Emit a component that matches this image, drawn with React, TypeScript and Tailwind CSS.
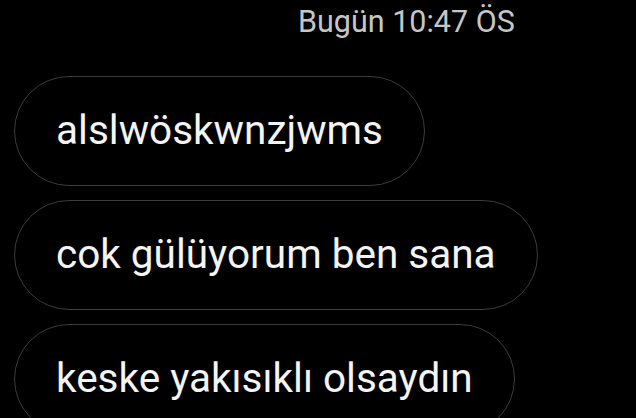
const messages = [
  "alslwöskwnzjwms",
  "cok gülüyorum ben sana",
  "keske yakısıklı olsaydın",
];

export default function App() {
  return (
    <div
      className="w-[636px] h-[418px] overflow-hidden bg-black"
      style={{ fontFamily: "Roboto, 'Noto Sans', sans-serif" }}
    >
      {/* date stamp */}
      <div className="pt-[7px] pl-[298px] text-[30.5px] leading-[30px] text-[#c6c6c6] whitespace-nowrap">
        Bugün 10:47 ÖS
      </div>

      {/* received bubbles */}
      <div className="mt-[39px] pl-[14px] flex flex-col items-start gap-[14px]">
        {messages.map((m) => (
          <div
            key={m}
            className="h-[110px] shrink-0 rounded-full border-[1.5px] border-[#3c3c3c] px-[41px] pt-[33px] text-[40.5px] leading-[40px] text-[#f4f4f4] whitespace-nowrap"
          >
            {m}
          </div>
        ))}
      </div>
    </div>
  );
}
